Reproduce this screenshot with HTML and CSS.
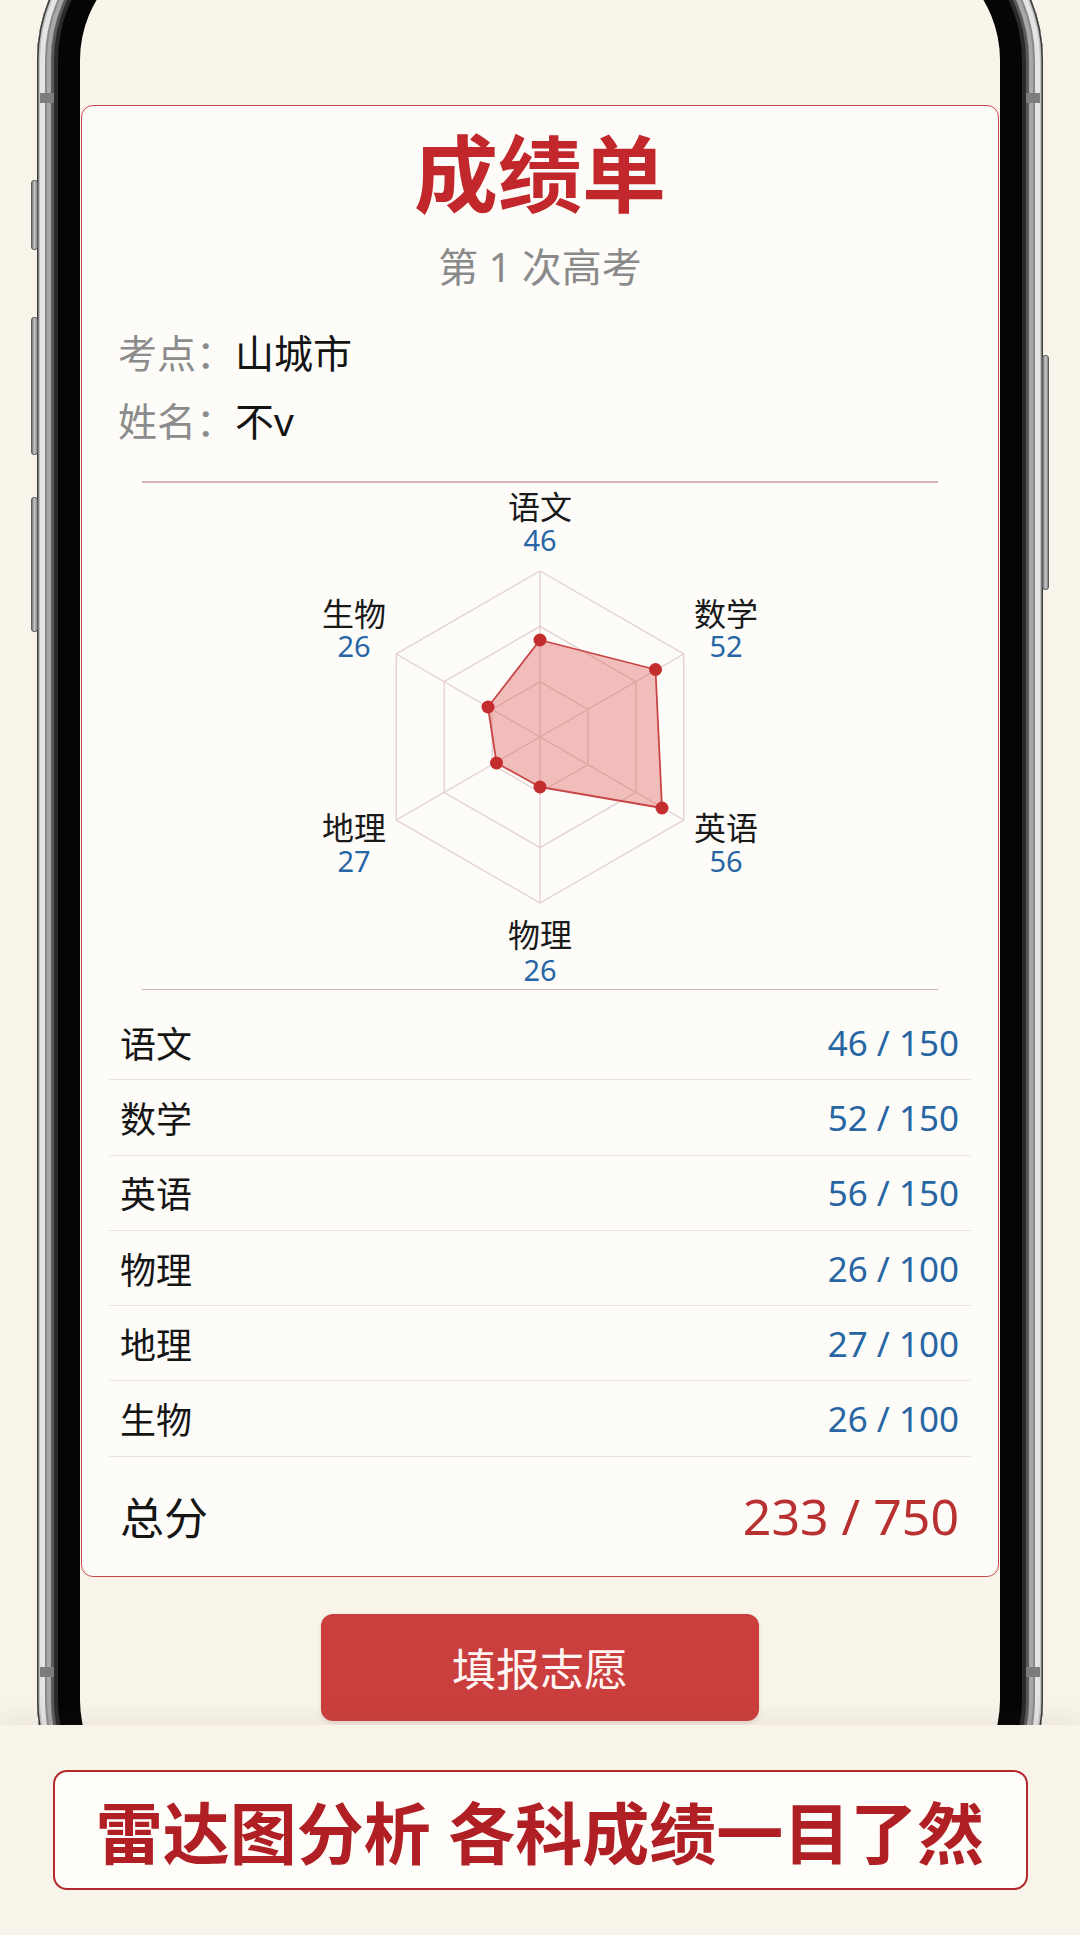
FILE: index.html
```html
<!DOCTYPE html>
<html lang="zh-CN">
<head>
<meta charset="utf-8">
<title>成绩单</title>
<link rel="stylesheet" href="styles.css">
</head>
<body>
<div class="stage">
  <div class="phone">
    <span class="side-btn btn-l1"></span>
    <span class="side-btn btn-l2"></span>
    <span class="side-btn btn-l3"></span>
    <span class="side-btn btn-r1"></span>
    <span class="antenna ant-lt"></span>
    <span class="antenna ant-rt"></span>
    <span class="antenna ant-lb"></span>
    <span class="antenna ant-rb"></span>
    <div class="screen">
      <div class="card">
        <h1 class="title">成绩单</h1>
        <div class="subtitle">第 1 次高考</div>
        <div class="info">
          <div class="info-row"><span class="info-label">考点：</span><span class="info-value">山城市</span></div>
          <div class="info-row"><span class="info-label">姓名：</span><span class="info-value">不v</span></div>
        </div>
        <div class="divider"></div>
        <svg class="radar" width="600" height="506" viewBox="0 0 600 506">
          <g class="grid">
            <polygon points="300,88 443.76,171 443.76,337 300,420 156.24,337 156.24,171"/>
            <polygon points="300,143.33 395.84,198.67 395.84,309.33 300,364.67 204.16,309.33 204.16,198.67"/>
            <polygon points="300,198.67 347.92,226.33 347.92,281.67 300,309.33 252.08,281.67 252.08,226.33"/>
            <line x1="300" y1="254" x2="300" y2="88"/>
            <line x1="300" y1="254" x2="443.76" y2="171"/>
            <line x1="300" y1="254" x2="443.76" y2="337"/>
            <line x1="300" y1="254" x2="300" y2="420"/>
            <line x1="300" y1="254" x2="156.24" y2="337"/>
            <line x1="300" y1="254" x2="156.24" y2="171"/>
          </g>
          <polygon class="area" points="300,157 415.5,186.5 422,325 300,304 256.5,280 248,224"/>
          <g class="dots">
            <circle cx="300" cy="157" r="6.5"/>
            <circle cx="415.5" cy="186.5" r="6.5"/>
            <circle cx="422" cy="325" r="6.5"/>
            <circle cx="300" cy="304" r="6.5"/>
            <circle cx="256.5" cy="280" r="6.5"/>
            <circle cx="248" cy="224" r="6.5"/>
          </g>
          <g class="labels">
            <text class="ax-name" x="300" y="23">语文</text>
            <text class="ax-val" x="300" y="56">46</text>
            <text class="ax-name" x="486" y="130">数学</text>
            <text class="ax-val" x="486" y="162">52</text>
            <text class="ax-name" x="486" y="344">英语</text>
            <text class="ax-val" x="486" y="377">56</text>
            <text class="ax-name" x="300" y="451">物理</text>
            <text class="ax-val" x="300" y="486">26</text>
            <text class="ax-name" x="114" y="344">地理</text>
            <text class="ax-val" x="114" y="377">27</text>
            <text class="ax-name" x="114" y="130">生物</text>
            <text class="ax-val" x="114" y="162">26</text>
          </g>
        </svg>
        <div class="divider"></div>
        <div class="scores">
          <div class="score-row"><span class="subject">语文</span><span class="score">46 / 150</span></div>
          <div class="score-row"><span class="subject">数学</span><span class="score">52 / 150</span></div>
          <div class="score-row"><span class="subject">英语</span><span class="score">56 / 150</span></div>
          <div class="score-row"><span class="subject">物理</span><span class="score">26 / 100</span></div>
          <div class="score-row"><span class="subject">地理</span><span class="score">27 / 100</span></div>
          <div class="score-row"><span class="subject">生物</span><span class="score">26 / 100</span></div>
          <div class="total-row"><span class="total-label">总分</span><span class="total-score">233 / 750</span></div>
        </div>
      </div>
      <div class="cta-wrap"><button class="cta">填报志愿</button></div>
    </div>
  </div>
</div>
<div class="band">
  <div class="banner">雷达图分析 各科成绩一目了然</div>
</div>
</body>
</html>
```

FILE: styles.css
```css
* { box-sizing: border-box; }

html, body {
  margin: 0;
  padding: 0;
}

body {
  width: 1080px;
  height: 1935px;
  overflow: hidden;
  background: #f8f4ea;
  font-family: "Noto Sans", "Noto Sans CJK SC", sans-serif;
  color: #1a1a1a;
}

.stage {
  height: 1725px;
  overflow: hidden;
}

.phone {
  position: relative;
  width: 1006px;
  height: 1960px;
  margin: -100px 0 0 37px;
  padding: 43px;
  border-radius: 160px;
  background: #050505;
  box-shadow:
    inset 0 0 0 1.5px #3a3a3a,
    inset 0 0 0 3px #bdbdbd,
    inset 0 0 0 8px #e4e4e4,
    inset 0 0 0 10px #8a8a8a,
    inset 0 0 0 14px #a8a8a8,
    inset 0 0 0 17px #5a5a5a,
    inset 0 0 0 21px #2a2a2a;
}

.side-btn {
  position: absolute;
  width: 7px;
  border-radius: 3px;
  background: linear-gradient(90deg, #6f6f6f, #c9c9c9 45%, #8d8d8d);
  border: 1px solid #5c5c5c;
}
.btn-l1 { left: -6px; top: 280px; height: 70px; }
.btn-l2 { left: -6px; top: 417px; height: 138px; }
.btn-l3 { left: -6px; top: 597px; height: 135px; }
.btn-r1 { right: -6px; top: 455px; height: 235px; }

.antenna {
  position: absolute;
  width: 14px;
  height: 10px;
  background: #7d7d7d;
}
.ant-lt { left: 3px; top: 193px; }
.ant-rt { right: 3px; top: 193px; }
.ant-lb { left: 3px; top: 1767px; }
.ant-rb { right: 3px; top: 1767px; }

.screen {
  height: 100%;
  border-radius: 117px;
  background: #f9f5eb;
  padding-top: 162px;
  overflow: hidden;
}

.card {
  width: 918px;
  margin: 0 auto;
  background: #fdfcf9;
  border: 1.5px solid #c44848;
  border-radius: 12px;
  padding: 26px 27px 0 27px;
}

.title {
  margin: 0;
  text-align: center;
  font-size: 84px;
  line-height: 84px;
  font-weight: 700;
  color: #c1272b;
  letter-spacing: 0;
}

.subtitle {
  margin-top: 31px;
  text-align: center;
  font-size: 40px;
  line-height: 40px;
  color: #8a8a8a;
}

.info {
  margin-top: 32px;
  padding-left: 9px;
}

.info-row {
  font-size: 39px;
  line-height: 68px;
  height: 68px;
}

.info-label { color: #8c8c8c; }
.info-value { color: #141414; }

.divider {
  height: 1.5px;
  margin: 0 33px;
  background: #d8b4b4;
}

.info + .divider { margin-top: 26px; }

.radar {
  display: block;
  margin: 0 auto;
}

.grid polygon,
.grid line {
  fill: none;
  stroke: #e4d0d0;
  stroke-width: 1.3;
}

.area {
  fill: rgba(218, 78, 78, 0.36);
  stroke: #c94646;
  stroke-width: 1.8;
  stroke-linejoin: round;
}

.dots circle { fill: #c42d2d; }

.labels text {
  text-anchor: middle;
  dominant-baseline: central;
  font-family: "Noto Sans", "Noto Sans CJK SC", sans-serif;
}

.ax-name { font-size: 32px; fill: #1a1a1a; }
.ax-val { font-size: 29px; fill: #2766a6; }

.scores {
  margin-top: 15px;
}

.score-row {
  height: 75.3px;
  display: flex;
  align-items: center;
  justify-content: space-between;
  padding: 0 12px 0 11px;
  border-bottom: 1.5px solid #e6e2de;
}

.subject {
  font-size: 36px;
  color: #151515;
}

.score {
  font-size: 35px;
  color: #2766a3;
}

.total-row {
  height: 119px;
  display: flex;
  align-items: center;
  justify-content: space-between;
  padding: 0 12px 0 11px;
}

.total-label {
  font-size: 44px;
  color: #151515;
}

.total-score {
  font-size: 50px;
  color: #b8302f;
}

.cta-wrap {
  display: flex;
  justify-content: center;
  padding-top: 37px;
}

.cta {
  width: 438px;
  height: 107px;
  border: none;
  border-radius: 12px;
  background: #cb3e3e;
  color: #fff5f2;
  font-family: "Noto Sans", "Noto Sans CJK SC", sans-serif;
  font-size: 44px;
  box-shadow: 0 2px 4px rgba(120, 30, 30, 0.15);
}

.band {
  position: relative;
  height: 210px;
  background: #f8f4ea;
  padding-top: 45px;
  box-shadow: 0 -8px 22px rgba(110, 90, 50, 0.09);
}

.banner {
  width: 975px;
  height: 120px;
  margin: 0 auto;
  border: 2.5px solid #b3292b;
  border-radius: 14px;
  background: #fffdfa;
  display: flex;
  align-items: center;
  justify-content: center;
  font-size: 67px;
  font-weight: 700;
  color: #b01f24;
  letter-spacing: 0;
}
```
